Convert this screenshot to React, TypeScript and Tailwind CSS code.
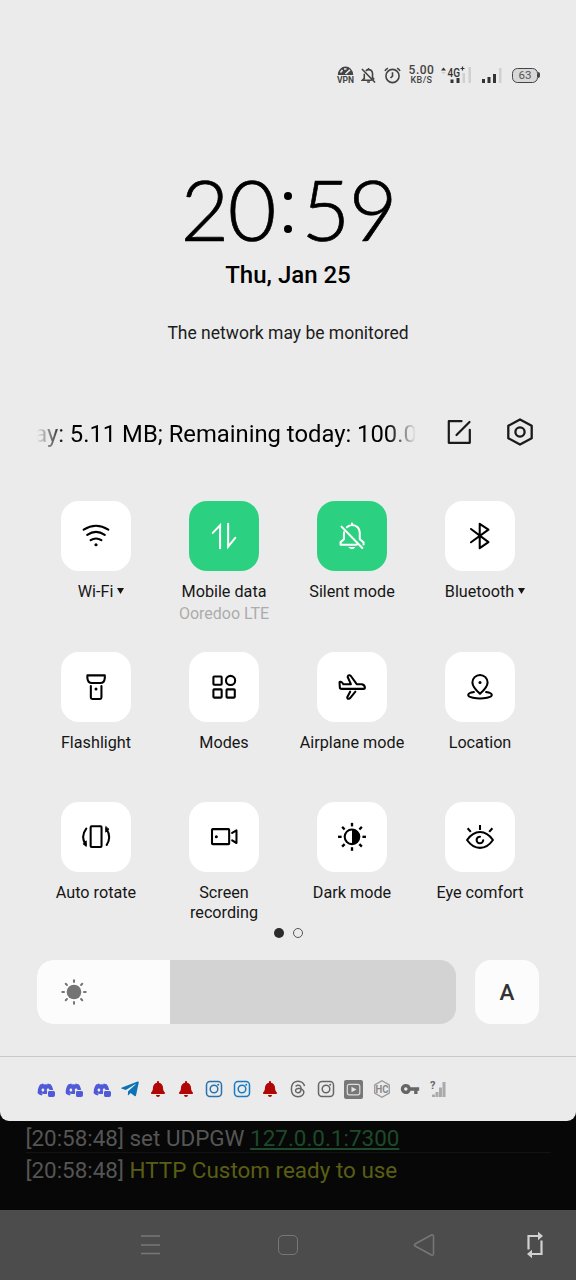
import React from "react";
import { FaBell, FaTelegramPlane, FaDiscord } from "react-icons/fa";
import { FaThreads } from "react-icons/fa6";
import { MdVpnKey } from "react-icons/md";

type IconProps = { children: React.ReactNode; className?: string };

const TileIcon = ({ children, className = "" }: IconProps) => (
	<svg
		viewBox="0 0 32 32"
		className={`size-[30px] ${className}`}
		fill="none"
		stroke="currentColor"
		strokeWidth="2.2"
		strokeLinecap="round"
		strokeLinejoin="round"
	>
		{children}
	</svg>
);

const rays = [0, 45, 90, 135, 180, 225, 270, 315];

const WifiIcon = () => (
	<TileIcon>
		<path d="M2.9 9.200Q16 1 29.100 9.200M6.700 14.800Q16 8.400 25.300 14.800M10.300 20.400Q16 16.800 21.700 20.400" />
		<circle cx="16" cy="25.3" r="1.7" fill="currentColor" stroke="none" />
	</TileIcon>
);

const DataIcon = () => (
	<TileIcon className="text-white">
		<path d="M4 12.7L11.800 4.600V29M20.400 3V27.400L28 18" strokeLinejoin="miter" />
	</TileIcon>
);

const SilentIcon = () => (
	<TileIcon className="text-white">
		<path d="M7.400 12V19.500L3.800 22.500V25.300H21M10.500 6.600Q13 4.200 16 4.200C21 4.200 24.300 8 24.300 12.500V19.500L28.300 22.800V25M16 2.800V4M4.800 6L27 28.800" />
		<path d="M13 28.300H19Q16 31.200 13 28.300Z" fill="currentColor" strokeWidth="1" />
	</TileIcon>
);

const BluetoothIcon = () => (
	<TileIcon>
		<path d="M6.400 8.500L25 22.600L15.700 29V3L25 9.200L6.400 22.700" />
	</TileIcon>
);

const FlashlightIcon = () => (
	<TileIcon>
		<path d="M6.800 3.600H25.400V6.500Q24.800 11.800 20.800 11.800H11.600Q7.400 11.800 6.800 6.500ZM10.500 15V27.300Q10.500 28.700 12 28.700H20.400Q21.800 28.700 21.800 27.300V15" />
		<circle cx="16" cy="18" r="1.6" fill="currentColor" stroke="none" />
	</TileIcon>
);

const ModesIcon = () => (
	<TileIcon>
		<rect x="4.7" y="4.8" width="8.8" height="8.8" rx=".8" />
		<circle cx="23" cy="9" r="4.9" />
		<rect x="4.7" y="18.5" width="8.8" height="8.8" rx=".8" />
		<rect x="18.7" y="18.5" width="8.8" height="8.8" rx=".8" />
	</TileIcon>
);

const AirplaneIcon = () => (
	<TileIcon>
		<path d="M2.700 11.500Q2.600 10.200 4 10.500Q5.500 10.800 6.800 13H14.800L11.400 5.300Q11.400 3.300 13.200 3.500Q14.500 3.700 15.200 4.800L21 13H26.500Q29.800 13.600 29.800 17Q29.700 18 28.400 18H5Q3 18 3 16.200ZM14 21L10.900 27Q11 29 12.700 28.500Q13.800 28.200 14.400 27.300L19.600 21" />
	</TileIcon>
);

const LocationIcon = () => (
	<TileIcon>
		<path d="M16 23.300Q7.900 16 7.900 11.200A8.100 8.100 0 0 1 24.100 11.200Q24.100 16 16 23.300Z" />
		<circle cx="16" cy="11.2" r="1.6" fill="currentColor" stroke="none" />
		<path d="M9.500 21.400C1.500 22.700 1.700 26.200 8.500 27.500Q16 29 23.500 27.500C30.300 26.200 30.500 22.700 22.500 21.400" />
	</TileIcon>
);

const RotateIcon = () => (
	<TileIcon>
		<rect x="10.3" y="4.5" width="11.6" height="22.2" rx="1" />
		<path d="M5.600 7Q-.8 15.500 5 24M27.200 7.500Q32.800 16 27.400 24.500" />
		<path d="M5.600 20.500V26L2.400 23.400ZM26.400 5.200V10.800L29.600 8Z" fill="currentColor" strokeWidth="1" />
	</TileIcon>
);

const RecordIcon = () => (
	<TileIcon>
		<rect x="3.2" y="7.6" width="18.3" height="16" rx=".8" />
		<path d="M24.700 11.700L29.300 9V22.400L24.700 19.600" />
		<circle cx="7.8" cy="15.7" r="1.6" fill="currentColor" stroke="none" />
	</TileIcon>
);

const DarkIcon = () => (
	<TileIcon>
		<circle cx="16" cy="15.8" r="7.8" />
		<path d="M16 8A7.800 7.800 0 0 1 16 23.600Z" fill="currentColor" stroke="none" />
		{rays.map((deg) => (
			<path key={deg} d="M16 .9V4.700" strokeLinecap="butt" strokeWidth="2.5" transform={`rotate(${deg} 16 15.8)`} />
		))}
	</TileIcon>
);

const EyeIcon = () => (
	<TileIcon>
		<path d="M2.200 19.200Q8 10.600 16 10.600T29.800 19.200Q24 27.600 16 27.600T2.200 19.200Z" />
		<path d="M16 15.700A3.500 3.500 0 1 0 19.400 19.400" />
		<path d="M16 3.200V8.400M2.800 6.700L6.200 10.600M29.200 6.700L25.800 10.600" strokeLinecap="butt" />
	</TileIcon>
);

interface Tile {
	label: string;
	icon: React.FC;
	sub?: string;
	active?: boolean;
	menu?: boolean;
}

const tiles: Tile[] = [
	{ label: "Wi-Fi", icon: WifiIcon, menu: true },
	{ label: "Mobile data", icon: DataIcon, active: true, sub: "Ooredoo LTE" },
	{ label: "Silent mode", icon: SilentIcon, active: true },
	{ label: "Bluetooth", icon: BluetoothIcon, menu: true },
	{ label: "Flashlight", icon: FlashlightIcon },
	{ label: "Modes", icon: ModesIcon },
	{ label: "Airplane mode", icon: AirplaneIcon },
	{ label: "Location", icon: LocationIcon },
	{ label: "Auto rotate", icon: RotateIcon },
	{ label: "Screen recording", icon: RecordIcon },
	{ label: "Dark mode", icon: DarkIcon },
	{ label: "Eye comfort", icon: EyeIcon },
];

const QuickTile = ({ label, icon: Icon, sub, active, menu }: Tile) => (
	<div className="flex flex-col items-center">
		<div className={`flex size-[70px] items-center justify-center rounded-[18px] ${active ? "bg-[#2bd180]" : "bg-white"}`}>
			<Icon />
		</div>
		<p
			className={`mt-[11px] flex max-w-[110px] items-center gap-[4px] text-center text-[16.2px] leading-[19.5px] text-[#161616] ${menu ? "ml-[10px]" : ""}`}
		>
			{label}
			{menu && (
				<svg viewBox="0 0 7 6" className="-mt-[2px] h-[6px] w-[7px]" fill="currentColor">
					<path d="M0 0H7L3.500 6Z" />
				</svg>
			)}
		</p>
		{sub && <p className="mt-[2.5px] text-[16px] leading-[19px] text-[#ababab]">{sub}</p>}
	</div>
);

const Bars = ({ className }: { className: string }) => (
	<svg viewBox="0 0 21 16" className={className}>
		<path d="M0 12h3v4H0zM5.500 10h3v6h-3zM11 7h3v9h-3z" fill="#333" />
		<path d="M17 1h2.500v15H17z" fill="#d0d0d0" />
	</svg>
);

const StatusBar = () => (
	<div className="flex h-[22px] items-center pl-[337px] text-[#444]">
		<div className="flex w-[17px] flex-col items-center gap-[1px]">
			<svg viewBox="0 0 17 9" className="h-[9px] w-[17px]">
				<path d="M.8 9A7.700 8.500 0 0 1 16.200 9Z" fill="#444" />
				<path d="M3.500 6.500L5.500 4M7 3H9.500M8.500 8L13 3.800" stroke="#ebebeb" strokeWidth="1.6" />
			</svg>
			<span className="text-[8.5px] leading-[8px] font-bold">VPN</span>
		</div>
		<svg viewBox="0 0 16 18" className="ml-[7px] h-[17px] w-[15px]" fill="none" stroke="#444" strokeWidth="1.7">
			<path d="M3.500 7V12L1.500 14H11.500M5.200 4Q6.500 2.700 8 2.700Q12 2.700 12.300 7V11L14 13.300M8 1V2.500M6.500 16H9.500M1 2L15 16.500" />
		</svg>
		<svg viewBox="0 0 17 17" className="ml-[8px] size-[17px]" fill="none" stroke="#444" strokeWidth="1.6">
			<circle cx="8.500" cy="9" r="6.600" />
			<path d="M8.500 5.200V9.200L6.500 11M1 4Q1.800 1.900 4 1.200M16 4Q15.200 1.900 13 1.200" />
		</svg>
		<div className="ml-[7px] flex w-[27px] flex-col items-center">
			<span className="text-[12px] leading-[11px] font-medium tracking-[0.5px]">5.00</span>
			<span className="text-[9px] leading-[9px] font-medium tracking-[0.4px]">KB/S</span>
		</div>
		<svg viewBox="0 0 32 20" className="ml-[6px] h-5 w-8">
			<path d="M0 5.500L2.500 2.500L5 5.500Z" fill="#333" />
			<path d="M0 7L2.500 9L5 7Z" fill="#ccc" />
			<path d="M21.500 8H24v10h-2.500zM27.500 2H30v16h-2.500z" fill="#d0d0d0" />
			<text x="6.500" y="11.5" fontSize="12" fontWeight="500" fill="#333" textLength="12.500" lengthAdjust="spacingAndGlyphs">
				4G
			</text>
			<path d="M19.500 3.500H23.500M21.500 1.500V5.500" stroke="#333" strokeWidth="1.2" />
			<path d="M9.500 14.500H12.500V18H9.500zM15.500 13H18.500V18h-3z" fill="#333" />
		</svg>
		<Bars className="mt-[-1px] ml-[9px] h-4 w-[21px]" />
		<div className="ml-[9px] flex items-center">
			<div className="flex h-[15px] w-[26px] items-center justify-center rounded-[5.5px] border-[1.5px] border-[#444] bg-[#d8d8d8] pt-[1px] text-[11.5px] leading-none text-[#555]">
				63
			</div>
			<div className="h-[6px] w-[2px] rounded-r bg-[#444]" />
		</div>
	</div>
);

const Discord = () => (
	<div className="relative">
		<FaDiscord className="size-[17px] text-[#5059d8]" />
		<span className="absolute right-[-1px] bottom-[1px] h-[7px] w-[8px] rounded-[2px] border-t border-l border-[#ebebeb] bg-[#5059d8]" />
	</div>
);

const Bell = () => <FaBell className="size-4 text-[#b00606]" />;

const Insta = ({ className }: { className: string }) => (
	<svg viewBox="0 0 18 18" className={`size-[18px] ${className}`} fill="none" stroke="currentColor" strokeWidth="1.5">
		<rect x="1.5" y="1.5" width="15" height="15" rx="3.5" />
		<circle cx="9" cy="9" r="3.8" />
		<circle cx="13.2" cy="4.8" r="1" fill="currentColor" stroke="none" />
	</svg>
);

const Notifications = () => (
	<div className="grid h-[64px] grid-cols-[repeat(15,28px)] place-items-center pl-[31.5px] text-[#666]">
		<Discord />
		<Discord />
		<Discord />
		<FaTelegramPlane className="size-[20px] text-[#0b72b5]" />
		<Bell />
		<Bell />
		<Insta className="text-[#2a72ae]" />
		<Insta className="text-[#1a7ac2]" />
		<Bell />
		<FaThreads className="size-[18px]" />
		<Insta className="text-[#666]" />
		<svg viewBox="0 0 19 19" className="size-[19px]">
			<rect width="19" height="19" rx="2" fill="#777" />
			<rect x="3.3" y="4.3" width="12.5" height="10.5" rx="2" fill="none" stroke="#ddd" strokeWidth="1.2" />
			<path d="M7.500 6.800V12.200L12.500 9.500Z" fill="#e6e6e6" />
		</svg>
		<svg viewBox="0 0 18 18" className="size-[18px]" fill="none" stroke="#999">
			<path d="M9 .8L16.300 5V13L9 17.200L1.700 13V5Z" strokeWidth="1.3" />
			<text x="2.5" y="12.8" fontSize="10.5" fontWeight="700" fill="#888" stroke="none" textLength="13" lengthAdjust="spacingAndGlyphs">
				HC
			</text>
		</svg>
		<MdVpnKey className="size-5" />
		<svg viewBox="0 0 16 18" className="h-[18px] w-4">
			<path d="M2 17V14.500h3V17zM5.500 17v-5h3v5zM9 17V7.500h3V17zM12.500 17V2h3v15z" fill="#aaa" />
			<text x="0" y="9" fontSize="11" fontWeight="700" fill="#666">
				?
			</text>
		</svg>
	</div>
);

const Brightness = () => (
	<div className="flex gap-[19px] pl-[37px]">
		<div className="h-16 w-[419px] overflow-hidden rounded-[16px] bg-[#d3d3d3]">
			<div className="flex h-full w-[133px] items-center bg-[#fcfcfc] pl-[22.5px]">
				<svg viewBox="0 0 28 28" className="size-7" stroke="#747474" strokeWidth="2" strokeLinecap="round">
					<circle cx="14" cy="14" r="7.3" fill="#747474" stroke="none" />
					{rays.map((deg) => (
						<path key={deg} d="M14 2.300V4" transform={`rotate(${deg} 14 14)`} />
					))}
				</svg>
			</div>
		</div>
		<div className="flex size-16 items-center justify-center rounded-[16px] bg-[#fcfcfc]">
			<span className="text-[22.5px] leading-none font-medium text-[#333]">A</span>
		</div>
	</div>
);

const App = () => {
	return (
		<div className="flex h-[1280px] w-[576px] flex-col overflow-hidden bg-[#070707] font-['Roboto','Noto_Sans',sans-serif]">
			<div className="h-[1121px] shrink-0 rounded-b-[9px] bg-[#ebebeb] pt-[64px] text-black">
				<StatusBar />

				<div className="mt-[79px] flex h-[88px] items-center justify-center pl-[2px] font-['Lato',sans-serif] text-[84px] leading-[88px] font-light [-webkit-text-stroke:0.7px_black]">
					<span className="w-[47px] text-center">2</span>
					<span className="w-[49px] text-center">0</span>
					<span className="mt-[6px] flex w-[25px] flex-col items-center gap-[25px] pr-[2px]">
						<i className="size-[8px] rounded-full bg-black" />
						<i className="size-[8px] rounded-full bg-black" />
					</span>
					<span className="w-[47px] text-center">5</span>
					<span className="w-[49px] text-center">9</span>
				</div>
				<p className="mt-[8px] text-center text-[24px] leading-[28px] font-medium">Thu, Jan 25</p>
				<p className="mt-[33px] text-center text-[17.5px] leading-[22px] text-[#1c1c1c]">The network may be monitored</p>

				<div className="mt-[68px] flex h-[42px] items-center pl-[37px]">
					<div className="mt-[2px] flex w-[379px] justify-center overflow-hidden [mask-image:linear-gradient(to_right,transparent,black_28px,black_351px,transparent)]">
						<p className="mr-[2px] shrink-0 text-[23.8px] leading-[34px] whitespace-nowrap">ay: 5.11 MB; Remaining today: 100.0</p>
					</div>
					<svg viewBox="0 0 28 28" className="mt-[-2px] ml-[29px] size-7" fill="none" stroke="#1a1a1a" strokeWidth="2.2" strokeLinecap="round" strokeLinejoin="round">
						<path d="M16.500 3.200H3.800V24.800H24.800V11.800M11.500 17L24.500 4" />
					</svg>
					<svg viewBox="0 0 30 30" className="mt-[-2px] ml-[32px] size-[30px]" fill="none" stroke="#1a1a1a" strokeWidth="2.3" strokeLinejoin="round">
						<path d="M15 2.500L26.700 8.800V21.200L15 27.500L3.300 21.200V8.800Z" />
						<circle cx="15" cy="15" r="4.6" />
					</svg>
				</div>

				<div className="mt-[47px] grid auto-rows-[150.5px] grid-cols-4 px-8">
					{tiles.map((tile) => (
						<QuickTile key={tile.label} {...tile} />
					))}
				</div>

				<div className="-mt-[24.5px] flex justify-center gap-[9px]">
					<span className="size-[10px] rounded-full bg-[#2b2b2b]" />
					<span className="size-[10px] rounded-full border border-[#555]" />
				</div>

				<div className="mt-[22px]">
					<Brightness />
				</div>
				<div className="mt-[32px] border-t border-[#c8c8c8]">
					<Notifications />
				</div>
			</div>

			<div className="h-[89px] shrink-0 px-[25.5px] pt-[1px] text-[22.45px] text-[#555]">
				<p className="h-[31px] border-b border-[#131313] leading-[33px]">
					[20:58:48] set UDPGW <span className="text-[#1c4a2a] underline underline-offset-2">127.0.0.1:7300</span>
				</p>
				<p className="leading-[34px]">
					[20:58:48] <span className="text-[#5a5e14]">HTTP Custom ready to use</span>
				</p>
			</div>

			<div className="flex h-[70px] shrink-0 items-center bg-[#4c4c4c] pl-[140px]">
				<svg viewBox="0 0 21 22" className="h-[22px] w-[21px]" stroke="#777" strokeWidth="1.5">
					<path d="M1 2H20M1 11H20M1 19.500H20" />
				</svg>
				<div className="ml-[117px] size-[20px] rounded-[5px] border-[1.5px] border-[#777]" />
				<svg viewBox="0 0 22 24" className="ml-[115px] h-6 w-[22px]" fill="none" stroke="#777" strokeWidth="1.5" strokeLinejoin="round">
					<path d="M18.500 2Q20.500 1.300 20.500 3.500V20.500Q20.500 22.700 18.500 22L2 13Q1 12 2 11Z" />
				</svg>
				<svg viewBox="0 0 18 28" className="ml-[91px] h-7 w-[18px]" fill="none" stroke="#d0d0d0" strokeWidth="2.2">
					<path d="M2.500 18.500V5H13M15.500 9.500V23H5" />
					<path d="M12 .8V9.200L17 5ZM6 18.800V27.200L1 23Z" fill="#d0d0d0" stroke="none" />
				</svg>
			</div>
		</div>
	);
};

export default App;
